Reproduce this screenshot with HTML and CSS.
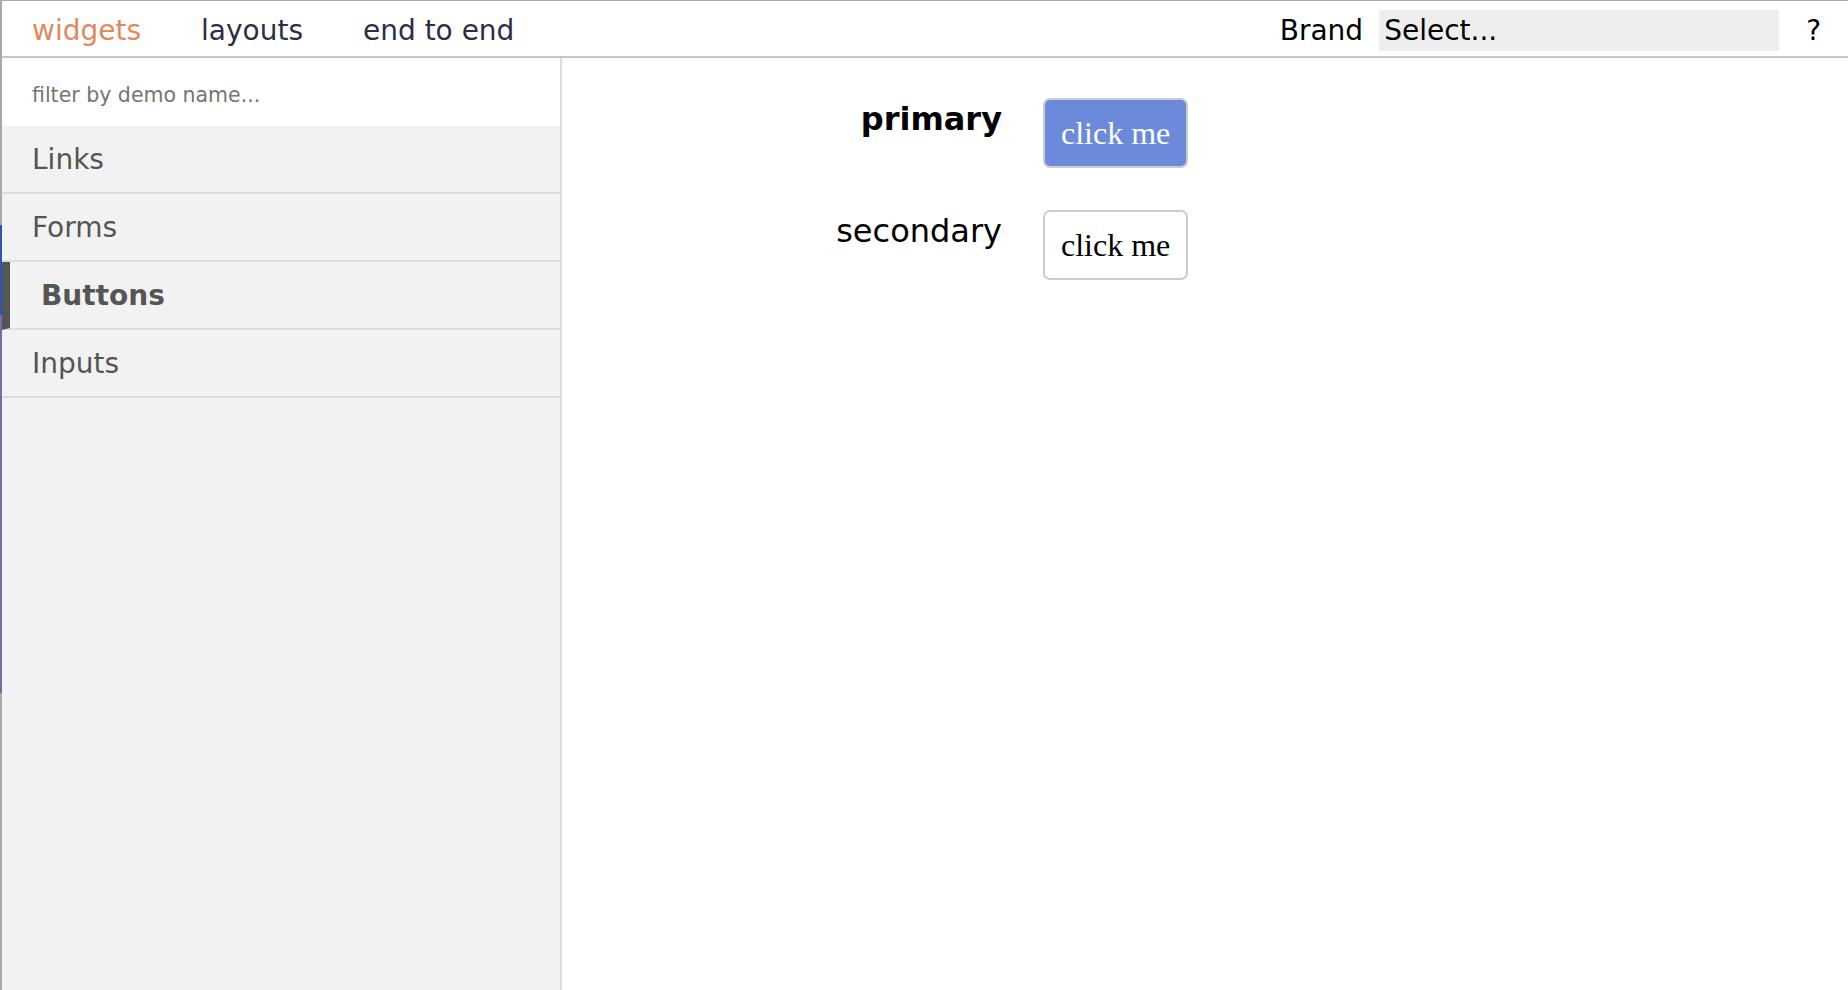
FILE: index.html
```html
<!DOCTYPE html>
<html lang="en">
<head>
<meta charset="utf-8">
<title>Demo</title>
<link rel="stylesheet" href="styles.css">
</head>
<body>
<div class="app">
  <header class="topbar">
    <nav class="tabs">
      <a class="tab tab-active">widgets</a>
      <a class="tab">layouts</a>
      <a class="tab">end to end</a>
    </nav>
    <div class="brand">
      <span class="brand-label">Brand</span>
      <div class="select">Select...</div>
      <span class="help">?</span>
    </div>
  </header>
  <div class="content">
    <aside class="sidebar">
      <input class="filter" type="text" placeholder="filter by demo name...">
      <ul class="demo-list">
        <li class="demo">Links</li>
        <li class="demo">Forms</li>
        <li class="demo demo-active">Buttons</li>
        <li class="demo">Inputs</li>
      </ul>
    </aside>
    <main class="main">
      <div class="demo-grid">
        <div class="label label-bold">primary</div>
        <div><button class="btn btn-primary">click me</button></div>
        <div class="label">secondary</div>
        <div><button class="btn btn-secondary">click me</button></div>
      </div>
    </main>
  </div>
</div>
</body>
</html>
```

FILE: styles.css
```css
html, body {
  margin: 0;
  padding: 0;
  height: 100%;
  background: #ffffff;
}

body {
  font-family: "DejaVu Sans", Verdana, sans-serif;
}

.app {
  height: 990px;
  box-sizing: border-box;
  border-top: 1px solid #a8a8a8;
  border-left: 2px solid #a8a8a8;
  border-image: linear-gradient(to bottom,
      #a8a8a8 0, #a8a8a8 225px,
      #2b56b3 225px, #2b56b3 315px,
      #7b6ca9 315px, #7b6ca9 692px,
      #a8a8a8 692px, #a8a8a8 100%) 1;
  display: flex;
  flex-direction: column;
  overflow: hidden;
}

.topbar {
  box-sizing: border-box;
  height: 57px;
  padding-top: 3px;
  border-bottom: 2px solid #c9c5c0;
  display: flex;
  align-items: center;
  justify-content: space-between;
  flex-shrink: 0;
}

.tabs {
  display: flex;
  gap: 60px;
  padding-left: 30px;
}

.tab {
  font-size: 28px;
  color: #2d2e45;
  text-decoration: none;
}

.tab-active {
  color: #df8a5e;
}

.brand {
  display: flex;
  align-items: center;
  padding-right: 27px;
  font-size: 28px;
  color: #000;
}

.brand-label {
  margin-right: 16px;
}

.select {
  width: 395px;
  height: 41px;
  line-height: 41px;
  padding-left: 5px;
  background: #eeeeee;
  margin-right: 27px;
}

.content {
  flex: 1;
  display: flex;
  min-height: 0;
}

.sidebar {
  width: 558px;
  flex-shrink: 0;
  background: #f2f2f2;
  border-right: 2px solid #dddddd;
  display: flex;
  flex-direction: column;
}

.filter {
  height: 68px;
  box-sizing: border-box;
  border: none;
  outline: none;
  padding: 5px 0 0 30px;
  margin: 0;
  background: #ffffff;
  font-family: "DejaVu Sans", Verdana, sans-serif;
  font-size: 20.5px;
  color: #333;
}

.filter::placeholder {
  color: #757575;
}

.demo-list {
  list-style: none;
  margin: 0;
  padding: 0;
}

.demo {
  height: 66px;
  border-bottom: 2px solid #dddddd;
  display: flex;
  align-items: center;
  padding-left: 30px;
  font-size: 28px;
  color: #555555;
}

.demo-active {
  font-weight: bold;
  border-left: 8px solid #555555;
  padding-left: 31px;
}

.main {
  flex: 1;
  padding-top: 40px;
}

.demo-grid {
  display: grid;
  grid-template-columns: 440px auto;
  column-gap: 41px;
  row-gap: 42px;
  align-items: start;
  justify-content: start;
}

.label {
  text-align: right;
  font-size: 32px;
  color: #000;
  line-height: 37px;
  padding-top: 3px;
}

.label-bold {
  font-weight: bold;
}

.btn {
  font-family: "Liberation Serif", "Times New Roman", serif;
  font-size: 32px;
  line-height: 38px;
  padding: 14px 16px;
  border: 2px solid #cccccc;
  border-radius: 7px;
  margin: 0;
  cursor: pointer;
}

.btn-primary {
  background: #6b8bda;
  color: #ffffff;
}

.btn-secondary {
  background: #ffffff;
  color: #000000;
}
```
